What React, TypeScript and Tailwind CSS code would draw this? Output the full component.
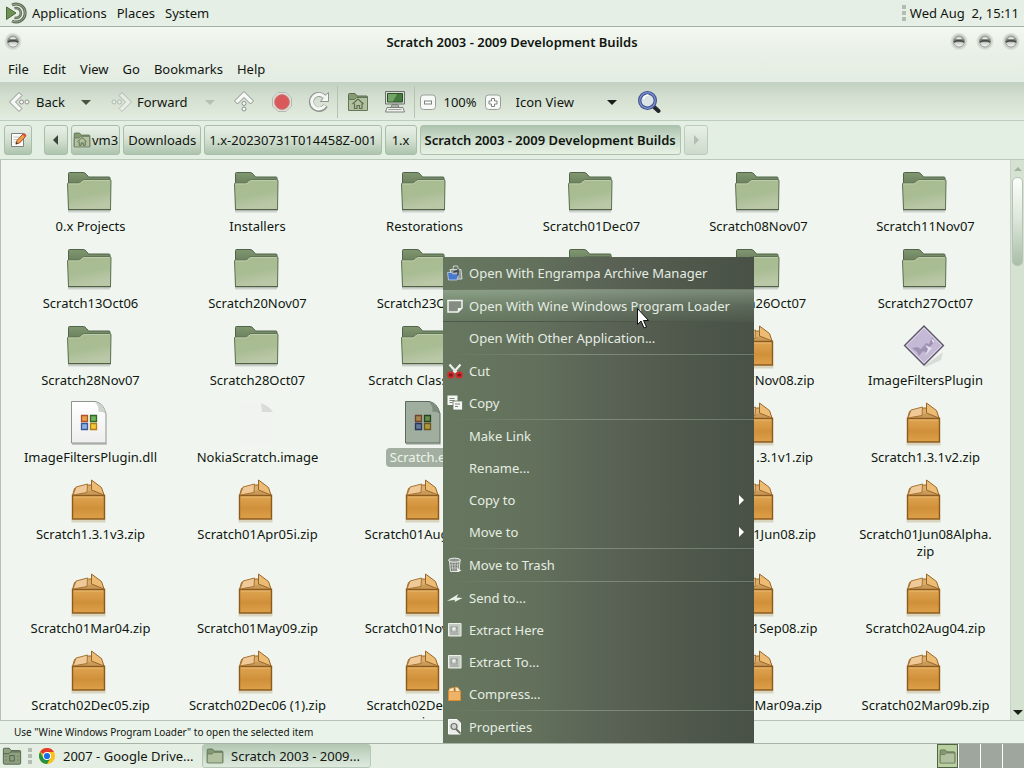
import React from "react";

type IconProps = { size?: number; className?: string };

function Defs() {
  return (
    <svg width="0" height="0" className="absolute" aria-hidden="true">
      <defs>
        <linearGradient id="folderFront" x1="0" y1="0" x2="0.3" y2="1">
          <stop offset="0" stopColor="#a9bb8f" />
          <stop offset="0.6" stopColor="#a9bd94" />
          <stop offset="1" stopColor="#bbc8a8" />
        </linearGradient>
        <linearGradient id="folderBack" x1="0" y1="0" x2="0" y2="1">
          <stop offset="0" stopColor="#819770" />
          <stop offset="0.4" stopColor="#657b59" />
          <stop offset="1" stopColor="#657b59" />
        </linearGradient>
        <linearGradient id="box" x1="0" y1="0" x2="0" y2="1">
          <stop offset="0" stopColor="#dfa552" />
          <stop offset="0.55" stopColor="#d0903a" />
          <stop offset="1" stopColor="#dda049" />
        </linearGradient>
        <linearGradient id="page" x1="0" y1="0" x2="0" y2="1">
          <stop offset="0" stopColor="#ffffff" />
          <stop offset="1" stopColor="#eeeeee" />
        </linearGradient>
        <linearGradient id="ball" x1="0" y1="0" x2="0" y2="1">
          <stop offset="0" stopColor="#b4b9b3" />
          <stop offset="0.45" stopColor="#70746f" />
          <stop offset="0.6" stopColor="#c9ccc8" />
          <stop offset="1" stopColor="#ffffff" />
        </linearGradient>
      </defs>
    </svg>
  );
}

function FolderIcon() {
  return (
    <svg width="48" height="48" viewBox="0 0 48 48">
      <path d="M3 44.500h42" stroke="#000" strokeOpacity="0.15" strokeWidth="2" />
      <path d="M3.500 42V6.500q0-1 1-1H18q2 0 3.500 2l2 2.500H44q1 0 1 1V42z" fill="url(#folderBack)" stroke="#51634a" />
      <path d="M2.500 17q0-1 1-1H13q1.500 0 3-1.500l1-1q1-1 3-1H44.500q1.500 0 1.500 1.500L45.500 42.500h-42z" fill="url(#folderFront)" stroke="#5f7355" />
      <path d="M3.500 17.500V17H13.500q2 0 3.500-2t3-1.500H44.500" fill="none" stroke="#bccbab" />
      <path d="M3 42.800h43" stroke="#4a5a44" />
    </svg>
  );
}

function BoxIcon() {
  return (
    <svg width="48" height="48" viewBox="0 0 48 48">
      <path d="M6.500 46h34" stroke="#8a5a10" strokeOpacity="0.22" strokeWidth="3" />
      <path d="M7.500 20.500l2-7 10-2.500 4-1h4l8 4 4 6.500z" fill="#dcae6b" stroke="#9a6a28" />
      <path d="M12 20l11-4 7-1 6 5z" fill="#c99a58" />
      <path d="M7.500 20.500h32v23.500h-32z" fill="url(#box)" stroke="#8c5a1c" strokeWidth="1.400" />
      <path d="M9 22h29" stroke="#f2c988" strokeOpacity="0.6" />
      <path d="M11 12l11.500-3-.5 8.500L8 20z" fill="#efc998" stroke="#a87433" />
      <path d="M26.500 5l10 7.500 2.500 7.500-12.500-5z" fill="#ecbb74" stroke="#99662a" />
    </svg>
  );
}

function PageIcon({ selected = false, blank = false }: { selected?: boolean; blank?: boolean }) {
  if (blank) {
    return (
      <svg width="48" height="48" viewBox="0 0 48 48">
        <path d="M7 3.500h21l13 12v29H7z" fill="#f1f3f0" />
        <path d="M29 5q1 8 1 9h11q-4-6-12-9z" fill="#d8dcd7" />
      </svg>
    );
  }
  return (
    <svg width="48" height="48" viewBox="0 0 48 48">
      <path d="M7 46h35" stroke="#000" strokeOpacity="0.25" strokeWidth="1.500" />
      <g transform="translate(-1 2)">
        <path d="M7.500 1.500H31q8 1 11 12v29.500h-34.500V2z" fill={selected ? "#a0aea0" : "url(#page)"} stroke={selected ? "#5b6a5b" : "#8f948f"} />
        <path d="M31 2q4 4 3.500 10 4-1 7 2-1-10-10.500-12z" fill={selected ? "#7f8d7f" : "#cfd3cf"} />
        <g strokeWidth="1.300">
          <path d="M17.500 15.500h6v6h-6z" fill={selected ? "#a5854f" : "#e7a046"} stroke={selected ? "#704229" : "#b5502c"} />
          <path d="M26.500 15.500h6v6h-6z" fill={selected ? "#6a8a4e" : "#77b157"} stroke={selected ? "#24451f" : "#2b6a22"} />
          <path d="M17.500 23.500h6v6h-6z" fill={selected ? "#657a94" : "#8fb1e2"} stroke={selected ? "#28375a" : "#3b5797"} />
          <path d="M26.500 23.500h6v6h-6z" fill={selected ? "#af9a38" : "#f3c93b"} stroke={selected ? "#6f5620" : "#b57c1c"} />
        </g>
      </g>
    </svg>
  );
}

function DiamondIcon() {
  return (
    <svg width="48" height="48" viewBox="0 0 48 48">
      <path d="M24 45l19-14-2 8-15 7z" fill="#000" opacity="0.1" />
      <path d="M24 5L43.500 24.500 24 44 4.500 24.500z" fill="#c5bad5" stroke="#5c5668" strokeWidth="1.300" />
      <path d="M24 7L41.500 24.500 24 42 6.500 24.500z" fill="none" stroke="#e0d9ea" />
      <path d="M12 27l5-1 4 2 5-6 3 1 3-7 3 4-5 6-3 6-4-2-4 5-2-4z" fill="#9f93b3" />
      <path d="M25 24l3 4-3 7 7-8zM31 17l4 3-2 2z" fill="#e6e0ee" />
    </svg>
  );
}

function SmallFolder({ size = 22, home = false, className }: IconProps & { home?: boolean }) {
  return (
    <svg width={size} height={size} viewBox="0 0 22 22" className={className}>
      <path d="M1.500 19V3.500q0-1 1-1H8l2 2.500h9.500q1 0 1 1V19z" fill="#839a72" stroke="#596b50" />
      <path d="M1.500 8.500h6l2-2h11V19q0 .500-.500.500H2q-.500 0-.500-.500z" fill="#b1c09f" stroke="#647659" />
      {home && (
        <path d="M5.500 13L11 8l5.500 5M7.500 12.500v5h2.500V14.500h2.500v3H15v-5" fill="none" stroke="#5c7052" strokeWidth="1.200" />
      )}
    </svg>
  );
}

function MateLogo() {
  return (
    <svg width="22" height="22" viewBox="0 0 22 22">
      <path d="M7 3A9 9 0 1 1 7 19" fill="none" stroke="#55644d" strokeWidth="3" />
      <path d="M7 3A9 9 0 1 1 7 19" fill="none" stroke="#a3b296" strokeWidth="1" />
      <path d="M9.500 6.200A5 5 0 1 1 9.500 15.800" fill="none" stroke="#55644d" strokeWidth="2.600" />
      <path d="M9.500 6.200A5 5 0 1 1 9.500 15.800" fill="none" stroke="#a3b296" strokeWidth="0.800" />
      <path d="M1.500 5l9.500 6-9.500 6.500z" fill="#6f9152" stroke="#4d663b" />
    </svg>
  );
}

function WindowBall() {
  return (
    <svg width="18" height="18" viewBox="0 0 18 18">
      <circle cx="9" cy="8.500" r="8" fill="#cdd4cc" stroke="#dbe2d9" />
      <circle cx="9" cy="8.500" r="5.500" fill="url(#ball)" stroke="#989d97" />
      <path d="M5.500 5.500q3.500-2.500 7 0-3.500 1.500-7 0z" fill="#e5e8e4" />
      <path d="M3.800 9q5.200-2.800 10.400 0" stroke="#484c48" fill="none" strokeWidth="1.600" />
    </svg>
  );
}

function ArrowIcon({ kind, faded = false }: { kind: "back" | "forward" | "up"; faded?: boolean }) {
  const turn = kind === "back" ? "" : kind === "forward" ? "rotate(180 12 12)" : "rotate(90 12 12)";
  return (
    <svg width="24" height="24" viewBox="0 0 24 24" opacity={faded ? 0.5 : 1}>
      <g transform={turn} fill="#f6f8f5" stroke="#8b918a">
        <path d="M1.500 12l9.500-9.500 3 3L7.500 12l6.500 6.500-3 3z" />
        <circle cx="13.500" cy="12" r="2" />
        <circle cx="19" cy="12" r="2" />
      </g>
    </svg>
  );
}

function StopIcon() {
  return (
    <svg width="22" height="22" viewBox="0 0 22 22">
      <path d="M7 1.500h8l5.500 5.500v8L15 20.500H7L1.500 15V7z" fill="#e3e0dc" stroke="#b7b7b1" />
      <circle cx="11" cy="11" r="7.500" fill="#d9595a" stroke="#c98884" />
    </svg>
  );
}

function ReloadIcon() {
  return (
    <svg width="22" height="22" viewBox="0 0 22 22">
      <path d="M17.500 14.500A7.500 7.500 0 1 1 16 5.500" fill="none" stroke="#8f958e" strokeWidth="5" />
      <path d="M12.500 10.500h8V1.500l-3 2.500z" fill="#f5f7f4" stroke="#8f958e" />
      <path d="M17 14.500A7.200 7.200 0 1 1 16.500 6" fill="none" stroke="#f5f7f4" strokeWidth="3.200" />
    </svg>
  );
}

function ComputerIcon() {
  return (
    <svg width="22" height="22" viewBox="0 0 22 22">
      <path d="M1.500.500h19V13h-19z" fill="#d9ddd6" stroke="#6a7068" />
      <path d="M3.500 2.500h15v8.500h-15z" fill="#447a3d" stroke="#2f4f2b" />
      <path d="M4 3h9l-4 7.500H4z" fill="#72a566" />
      <path d="M8 13.500h6l1 3H7z" fill="#aab0a8" stroke="#7d837b" />
      <path d="M3 16.500h16l1.500 4.500h-19z" fill="#f0f2ee" stroke="#7d837b" />
      <path d="M4.500 18.500h13" stroke="#9ba199" />
    </svg>
  );
}

function ZoomIcon({ plus = false }: { plus?: boolean }) {
  return (
    <svg width="16" height="16" viewBox="0 0 16 16">
      <rect x="0.500" y="1" width="15" height="14.500" rx="3" fill="#f7f9f6" stroke="#9aa099" />
      {plus ? (
        <path d="M6.500 4.500h3v2.500H12v3H9.500v2.500h-3V10H4V7h2.500z" fill="#fff" stroke="#7d837b" />
      ) : (
        <rect x="4.500" y="7" width="7" height="3" fill="#fff" stroke="#7d837b" />
      )}
    </svg>
  );
}

function SearchIcon() {
  return (
    <svg width="24" height="24" viewBox="0 0 24 24">
      <path d="M15.500 15.500l6 5.500" stroke="#23272c" strokeWidth="4" strokeLinecap="round" />
      <circle cx="10.500" cy="10.500" r="7.800" fill="#dbe5ea" fillOpacity="0.8" stroke="#3d4f8f" strokeWidth="3.400" />
      <circle cx="10.500" cy="10.500" r="7.800" fill="none" stroke="#8395cf" strokeWidth="1.200" />
      <path d="M6.500 9q1-4 5-4" fill="none" stroke="#fff" strokeWidth="1.500" />
    </svg>
  );
}

function EditIcon() {
  return (
    <svg width="18" height="18" viewBox="0 0 18 18">
      <path d="M2.500 2.500h12v13h-12z" fill="#fdfdfc" stroke="#7d827c" />
      <path d="M4.500 6h6M4.500 8.500h4M4.500 11h3" stroke="#c3c6c2" />
      <path d="M7 13l1-3.500 6-6.500 2.500 2.500-6 6.500z" fill="#f0a04a" stroke="#a8491e" />
      <path d="M13.500 3.500l1.500-1.500 2.500 2-1.500 2z" fill="#d94a3c" />
      <path d="M6.500 13.500l1-2.500 1.500 1.500z" fill="#333" />
    </svg>
  );
}

function ChromeIcon() {
  return (
    <svg width="16" height="16" viewBox="0 0 16 16">
      <circle cx="8" cy="8" r="8" fill="#fbc116" />
      <path d="M8 8L1.070 4A8 8 0 0 1 14.930 4H8z" fill="#e33b2e" />
      <path d="M1.070 4A8 8 0 0 0 8 16l3.460-6L8 8 4.540 10z" fill="#229342" />
      <circle cx="8" cy="8" r="4" fill="#fff" />
      <circle cx="8" cy="8" r="3.100" fill="#1a6fe8" />
    </svg>
  );
}

function Triangle({ dir, color = "#1a1f1a" }: { dir: "down" | "left" | "right" | "up"; color?: string }) {
  const d = {
    down: "M0 3h10L5 8z",
    up: "M1 7h8L5 3z",
    left: "M7 0v10L2 5z",
    right: "M3 0v10l5-5z",
  }[dir];
  return (
    <svg width="10" height="10" viewBox="0 0 10 10">
      <path d={d} fill={color} />
    </svg>
  );
}

type Kind = "folder" | "zip" | "dll" | "exe" | "blank" | "so";
const files: [string, Kind][] = [
  ["0.x Projects", "folder"],
  ["Installers", "folder"],
  ["Restorations", "folder"],
  ["Scratch01Dec07", "folder"],
  ["Scratch08Nov07", "folder"],
  ["Scratch11Nov07", "folder"],
  ["Scratch13Oct06", "folder"],
  ["Scratch20Nov07", "folder"],
  ["Scratch23Oct07", "folder"],
  ["", "folder"],
  ["Scratch26Oct07", "folder"],
  ["Scratch27Oct07", "folder"],
  ["Scratch28Nov07", "folder"],
  ["Scratch28Oct07", "folder"],
  ["Scratch Classroom", "folder"],
  ["", "folder"],
  ["Scratch7Nov08.zip", "zip"],
  ["ImageFiltersPlugin", "so"],
  ["ImageFiltersPlugin.dll", "dll"],
  ["NokiaScratch.image", "blank"],
  ["Scratch.exe", "exe"],
  ["", "zip"],
  ["Scratch1.3.1v1.zip", "zip"],
  ["Scratch1.3.1v2.zip", "zip"],
  ["Scratch1.3.1v3.zip", "zip"],
  ["Scratch01Apr05i.zip", "zip"],
  ["Scratch01Aug04.zip", "zip"],
  ["", "zip"],
  ["Scratch01Jun08.zip", "zip"],
  ["Scratch01Jun08Alpha.\u200bzip", "zip"],
  ["Scratch01Mar04.zip", "zip"],
  ["Scratch01May09.zip", "zip"],
  ["Scratch01Nov04.zip", "zip"],
  ["", "zip"],
  ["Scratch01Sep08.zip", "zip"],
  ["Scratch02Aug04.zip", "zip"],
  ["Scratch02Dec05.zip", "zip"],
  ["Scratch02Dec06 (1).zip", "zip"],
  ["Scratch02Dec06 (2)\nzip", "zip"],
  ["", "zip"],
  ["Scratch02Mar09a.zip", "zip"],
  ["Scratch02Mar09b.zip", "zip"],
];

function FileItem({ name, kind }: { name: string; kind: Kind }) {
  const selected = kind === "exe";
  return (
    <li className="flex flex-col items-center gap-[3px]">
      <span className="mr-[3px] block">
        {kind === "folder" && <FolderIcon />}
        {kind === "zip" && <BoxIcon />}
        {kind === "dll" && <PageIcon />}
        {kind === "exe" && <PageIcon selected />}
        {kind === "blank" && <PageIcon blank />}
        {kind === "so" && <DiamondIcon />}
      </span>
      <span
        className={
          selected
            ? "rounded-[3px] bg-[#a3b0a1] px-[3px] text-center leading-[17px] text-[#eef4ec] ring-1 ring-[#a3b0a1]"
            : "max-w-[140px] whitespace-pre-line text-center leading-[17px]"
        }
      >
        {name}
      </span>
    </li>
  );
}

type MenuEntry = { label: string; icon?: React.ReactNode; sub?: boolean; hot?: boolean; line?: boolean };

const extractIcon = (
  <svg width="16" height="16" viewBox="0 0 16 16">
    <path d="M1.500 1.500h12.500v12.500h-12.500z" fill="#c3c9c2" stroke="#eef0ed" />
    <path d="M4 5h6v5H4zM5 8l5-2M3.500 12h8" fill="none" stroke="#959c94" strokeWidth="1.200" />
    <path d="M5 6l3-1 1 2-3 2z" fill="#eef0ed" />
  </svg>
);

const menu: MenuEntry[] = [
  {
    label: "Open With Engrampa Archive Manager",
    line: true,
    icon: (
      <svg width="16" height="16" viewBox="0 0 16 16">
        <path d="M6 4.500L6.500 1h4l1 3.500" fill="none" stroke="#c9cfc9" />
        <path d="M3 4.500h11l1 9.500H5z" fill="#8f9791" stroke="#d3d8d3" />
        <path d="M.500 7.500h4L6 9l6-.5L10 15H1.500z" fill="#4a79cc" stroke="#cfdcf5" strokeWidth="0.700" />
        <path d="M11 4v6.500M6.500 7l5-1.500" stroke="#3a414a" strokeWidth="1.400" />
      </svg>
    ),
  },
  {
    label: "Open With Wine Windows Program Loader",
    hot: true,
    icon: (
      <svg width="16" height="16" viewBox="0 0 16 16">
        <path d="M1 2.500h14V10l-4 4H1z" fill="#858d83" stroke="#f2f4f1" strokeWidth="1.500" />
        <path d="M10.500 14l.5-4h4z" fill="#f2f4f1" />
      </svg>
    ),
  },
  { label: "Open With Other Application...", line: true },
  {
    label: "Cut",
    icon: (
      <svg width="16" height="16" viewBox="0 0 16 16">
        <path d="M2.500 1.500L10 10M13.500 1.500L6 10" stroke="#eef0ed" strokeWidth="2.200" />
        <rect x="1" y="9.500" width="5.500" height="5" rx="2.200" fill="#7a1c1c" stroke="#d62b2b" strokeWidth="1.800" />
        <rect x="9.500" y="9.500" width="5.500" height="5" rx="2.200" fill="#7a1c1c" stroke="#d62b2b" strokeWidth="1.800" />
      </svg>
    ),
  },
  {
    label: "Copy",
    line: true,
    icon: (
      <svg width="16" height="16" viewBox="0 0 16 16">
        <path d="M.500.500h10v9.500h-10z" fill="#f4f6f3" />
        <path d="M2.500 3.500h5M2.500 5.500h5M2.500 7.500h3" stroke="#7c857b" />
        <path d="M6 6h9.500v9H6z" fill="#f4f6f3" stroke="#66735f" strokeWidth="0.800" />
        <path d="M8 9h5M8 11.500h3" stroke="#7c857b" />
      </svg>
    ),
  },
  { label: "Make Link" },
  { label: "Rename..." },
  { label: "Copy to", sub: true },
  { label: "Move to", sub: true, line: true },
  {
    label: "Move to Trash",
    line: true,
    icon: (
      <svg width="16" height="16" viewBox="0 0 16 16">
        <path d="M2.500 4l1 10.500h8.500L13 4z" fill="#737b72" stroke="#e3e6e2" />
        <path d="M5 5l1 9M8 5v9M11 5l-1 9M3 8h10M3.500 11h9" stroke="#cdd1cc" strokeWidth="0.800" />
        <ellipse cx="7.500" cy="3.200" rx="6" ry="2" fill="#8d958c" stroke="#f1f3f0" />
        <path d="M10 11l4.500 2.500-4 1.500" fill="#f1f3f0" />
      </svg>
    ),
  },
  {
    label: "Send to...",
    icon: (
      <svg width="16" height="16" viewBox="0 0 16 16">
        <path d="M0 11L11.500 4 9.500 7.500l6 .5L7.500 12 8 9.800z" fill="#eaf2e8" />
      </svg>
    ),
  },
  { label: "Extract Here", icon: extractIcon },
  { label: "Extract To...", icon: extractIcon },
  {
    label: "Compress...",
    line: true,
    icon: (
      <svg width="16" height="16" viewBox="0 0 16 16">
        <path d="M1.500 5.500h12v9h-12z" fill="#efb367" stroke="#dd8c2c" />
        <path d="M1.500 5.500l1-3L7 1.500v4zM8 1l3 .5 2.500 4h-5z" fill="#fbe3c2" stroke="#dd8c2c" strokeWidth="0.700" />
      </svg>
    ),
  },
  {
    label: "Properties",
    icon: (
      <svg width="16" height="16" viewBox="0 0 16 16">
        <path d="M1.500.500H10l3.500 3.500v11h-12z" fill="#e9ece8" stroke="#fff" />
        <circle cx="7" cy="7.500" r="3" fill="#cfd5ce" stroke="#6a7268" strokeWidth="1.200" />
        <path d="M9 10l4.500 4.500" stroke="#6a7268" strokeWidth="1.800" />
      </svg>
    ),
  },
];

function ContextMenu() {
  return (
    <div
      role="menu"
      className="absolute left-[443px] top-[257px] flex w-[311px] flex-col bg-[linear-gradient(to_right,#67775f_0%,#63715c_28%,#5a6356_52%,#4f584b_78%,#495146_100%)] text-[#e6ede3] [text-shadow:0_1px_1px_#39423a]"
    >
      {menu.map((m) => (
        <div key={m.label}>
          <button
            type="button"
            role="menuitem"
            className={
              m.hot
                ? "flex h-8 w-full items-center gap-[6px] border-b border-[#4d584a] bg-[linear-gradient(to_bottom,rgba(190,215,190,0.42)_0%,rgba(150,180,150,0.25)_50%,rgba(110,140,110,0.1)_100%)] pl-1 pr-2 text-left"
                : "flex h-8 w-full items-center gap-[6px] pl-1 pr-2 text-left"
            }
          >
            <span className="flex w-4 shrink-0">{m.icon}</span>
            <span className="flex-1">{m.label}</span>
            {m.sub && <Triangle dir="right" color="#ffffff" />}
          </button>
          {m.line && <div className="h-px bg-[linear-gradient(to_right,#66755f_0%,#7f8c79_45%,#6d7969_100%)]" />}
        </div>
      ))}
    </div>
  );
}

const crumb =
  "flex h-[30px] shrink-0 items-center justify-center rounded-[3px] border border-[#a9bda9] bg-[linear-gradient(to_bottom,#e8f0e6_0%,#d3e0d1_50%,#adc4ae_100%)]";

function Grip() {
  return (
    <span className="flex w-1 flex-col gap-[2px]">
      <i className="h-1 bg-[#b3bcb2]" />
      <i className="h-1 bg-[#b3bcb2]" />
      <i className="h-1 bg-[#b3bcb2]" />
    </span>
  );
}

export default function App() {
  return (
    <div className="relative flex h-screen flex-col overflow-hidden bg-[#e6efe5] font-['Noto_Sans',sans-serif] text-[13px] leading-[18px] text-[#111611]">
      <Defs />
      <header className="flex h-[27px] shrink-0 items-center border-b border-[#a7afa6] pl-[5px] pr-[5px]">
        <MateLogo />
        <nav className="flex flex-1 gap-[10px] pl-[5px]">
          <button type="button">Applications</button>
          <button type="button">Places</button>
          <button type="button">System</button>
        </nav>
        <Grip />
        <time className="whitespace-pre pl-1">Wed Aug  2, 15:11</time>
      </header>

      <div className="shrink-0 bg-[linear-gradient(to_bottom,#f3f8f1_0%,#e9f0e7_45%,#e4ede3_100%)]">
        <div className="flex h-[29px] items-center px-1">
          <div className="flex flex-1">
            <button type="button" aria-label="Window menu">
              <WindowBall />
            </button>
          </div>
          <h1 className="font-semibold">Scratch 2003 - 2009 Development Builds</h1>
          <div className="flex flex-1 justify-end gap-2">
            <button type="button" aria-label="Minimize">
              <WindowBall />
            </button>
            <button type="button" aria-label="Maximize">
              <WindowBall />
            </button>
            <button type="button" aria-label="Close">
              <WindowBall />
            </button>
          </div>
        </div>
        <nav className="flex h-[26px] items-center gap-[14px] px-2">
          {["File", "Edit", "View", "Go", "Bookmarks", "Help"].map((t) => (
            <button type="button" key={t}>
              {t}
            </button>
          ))}
        </nav>
      </div>

      <div className="flex h-[39px] shrink-0 items-center border-b border-[#bccdbc] bg-[linear-gradient(to_bottom,#c3d1c2_0%,#d3dfd0_40%,#e0e9db_85%,#e4ede2_100%)] pl-2 pt-px">
        <button type="button" className="flex items-center gap-1">
          <ArrowIcon kind="back" />
          Back
        </button>
        <button type="button" aria-label="Back history" className="ml-4">
          <Triangle dir="down" color="#48543f" />
        </button>
        <button type="button" className="ml-[18px] flex items-center gap-1">
          <ArrowIcon kind="forward" faded />
          Forward
        </button>
        <button type="button" aria-label="Forward history" className="ml-[17px]" disabled>
          <Triangle dir="down" color="#b5c2b3" />
        </button>
        <button type="button" aria-label="Up" className="ml-[17px]">
          <ArrowIcon kind="up" />
        </button>
        <button type="button" aria-label="Stop" className="ml-[15px]">
          <StopIcon />
        </button>
        <button type="button" aria-label="Reload" className="ml-[15px]">
          <ReloadIcon />
        </button>
        <div className="ml-[7px] h-8 border-l border-[#b3c2b2]" />
        <button type="button" aria-label="Home" className="ml-[9px]">
          <SmallFolder home />
        </button>
        <button type="button" aria-label="Computer" className="ml-[15px]">
          <ComputerIcon />
        </button>
        <div className="ml-[8px] h-8 border-l border-[#b3c2b2]" />
        <button type="button" aria-label="Zoom out" className="ml-[5px]">
          <ZoomIcon />
        </button>
        <span className="w-[49px] text-center">100%</span>
        <button type="button" aria-label="Zoom in">
          <ZoomIcon plus />
        </button>
        <label className="ml-[15px] flex w-[101px] items-center">
          <select aria-label="View mode" className="w-[91px] appearance-none bg-transparent">
            <option>Icon View</option>
          </select>
          <Triangle dir="down" />
        </label>
        <button type="button" aria-label="Search" className="ml-[20px]">
          <SearchIcon />
        </button>
      </div>

      <div className="flex h-[39px] shrink-0 items-center gap-[3px] border-b border-[#b9c8b8] bg-[#e4efe4] pl-1">
        <button type="button" aria-label="Edit location" className={`${crumb} mr-[9px] w-7`}>
          <EditIcon />
        </button>
        <button type="button" aria-label="Scroll left" className={`${crumb} w-6`}>
          <Triangle dir="left" color="#38433a" />
        </button>
        <button type="button" className={`${crumb} gap-px px-px`}>
          <SmallFolder size={18} home />
          vm3
        </button>
        <button type="button" className={`${crumb} px-1`}>
          Downloads
        </button>
        <button type="button" className={`${crumb} px-1`}>
          1.x-20230731T014458Z-001
        </button>
        <button type="button" className={`${crumb} w-8`}>
          1.x
        </button>
        <button
          type="button"
          className="flex h-[30px] shrink-0 items-center rounded-[3px] border border-[#adc3ad] bg-[linear-gradient(to_bottom,#adc3ae_0%,#ccdccc_45%,#e6f1e4_100%)] px-1 font-semibold"
        >
          Scratch 2003 - 2009 Development Builds
        </button>
        <button
          type="button"
          aria-label="Scroll right"
          disabled
          className="flex h-[30px] w-6 items-center justify-center rounded-[3px] border border-[#bccbbb] bg-[linear-gradient(to_bottom,#e8f0e6,#ccdacb)]"
        >
          <Triangle dir="right" color="#b0bfaf" />
        </button>
      </div>

      <main className="flex min-h-0 flex-1 border-l border-[#b5bfb4]">
        <ul className="grid flex-1 auto-rows-max grid-cols-6 content-start gap-y-[9px] overflow-hidden bg-[#f0f6ef] pl-[6px] pr-px pt-[7px]">
          {files.map(([name, kind], i) => (
            <FileItem key={i} name={name} kind={kind} />
          ))}
        </ul>
        <div className="flex w-[14px] flex-col items-center border-l border-[#c6d3c4] bg-[#d5e2d1]">
          <span className="flex h-[17px] items-center">
            <Triangle dir="up" color="#a3b3a1" />
          </span>
          <div className="h-[89px] w-[11px] rounded-[5px] border border-[#b5c3b4] bg-[linear-gradient(to_bottom,#fbfdfa_0%,#dfe8dd_45%,#a9bea8_100%)]" />
          <span className="mt-auto flex h-[17px] items-center">
            <Triangle dir="down" />
          </span>
        </div>
      </main>

      <footer className="flex h-[23px] shrink-0 items-center border-t border-[#b5c3b4] bg-[#eaf3e9] pl-[14px] text-[10px]">
        Use "Wine Windows Program Loader" to open the selected item
      </footer>

      <div className="flex h-[25px] shrink-0 items-center border-t border-[#a8b3a7] bg-[#e4eee3]">
        <button type="button" aria-label="Show desktop" className="ml-[2px] mr-[6px]">
          <svg width="20" height="20" viewBox="0 0 22 22">
            <path d="M1.500 19V3.500q0-1 1-1H8l2 2.500h9.500q1 0 1 1V19q0 1-1 1h-17q-1 0-1-1z" fill="#8ea07f" stroke="#4f5f48" />
            <path d="M1.500 8.500h6l2-2h11" fill="none" stroke="#4f5f48" />
            <path d="M8.500 10.500h5v6h-5zM4.500 11v1m0 3v1m13-5v1m0 3v1" fill="none" stroke="#4f5f48" />
          </svg>
        </button>
        <Grip />
        <button type="button" className="flex h-6 w-[170px] items-center gap-2 pl-[7px]">
          <ChromeIcon />
          2007 - Google Drive...
        </button>
        <button
          type="button"
          className="flex h-6 w-[169px] items-center gap-[7px] rounded-[3px] border border-[#b5c8b5] bg-[linear-gradient(to_bottom,#b3c8b3_0%,#cbdbcb_50%,#dde9dc_100%)] pl-[3px]"
        >
          <SmallFolder size={18} />
          Scratch 2003 - 2009...
        </button>
        <div className="ml-auto flex h-full gap-px bg-white">
          <button
            type="button"
            aria-label="Workspace 1"
            className="flex w-[21px] items-center justify-center border border-[#4e6442] bg-[#b9cf9f]"
          >
            <SmallFolder size={17} />
          </button>
          <button type="button" aria-label="Workspace 2" className="w-[21px] bg-[#9ea69e]" />
          <button type="button" aria-label="Workspace 3" className="w-[21px] bg-[#9ea69e]" />
          <button type="button" aria-label="Workspace 4" className="w-[21px] bg-[#9ea69e]" />
        </div>
      </div>

      <ContextMenu />
      <svg width="14" height="22" viewBox="0 0 14 22" className="pointer-events-none absolute left-[636px] top-[307px]">
        <path d="M1.500 1.500v16l3.500-3.500 3 7 2.500-1-3-6.500H12.500z" fill="#fff" stroke="#111" />
      </svg>
    </div>
  );
}
